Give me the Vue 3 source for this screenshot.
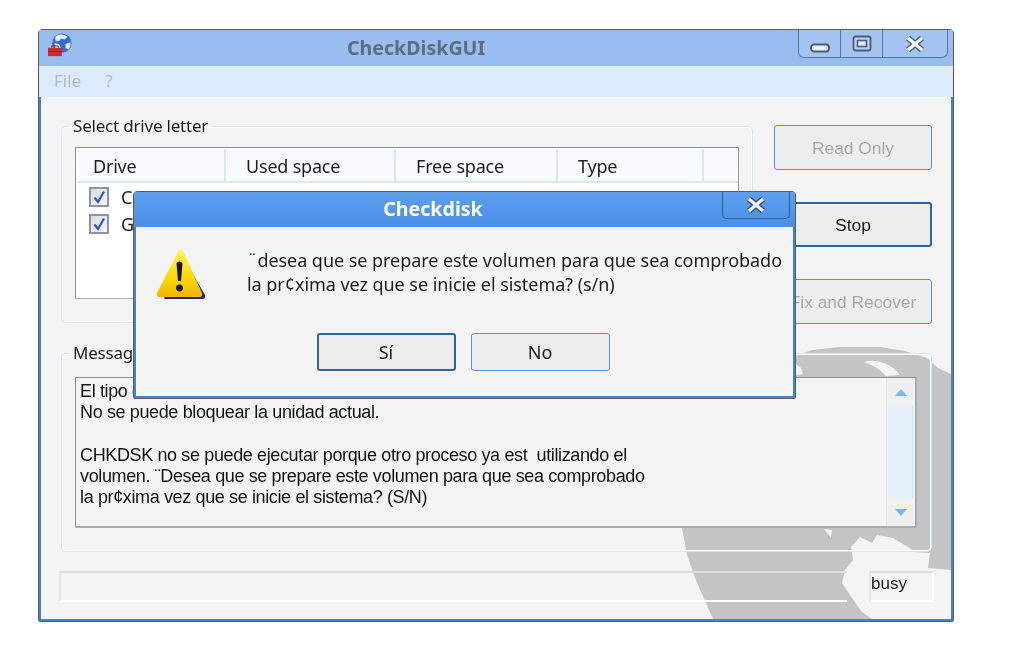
<template>
  <div class="screen">
    <div class="window">
      <div class="titlebar">
        <svg class="app-icon" width="26" height="24" viewBox="0 0 28 26">
          <circle cx="16" cy="11" r="10.5" fill="#2f6fd8" />
          <path d="M9 4c3-3 9-3 13 0l-3 3-4-1-2 3-4-1zM20 12l5-2c1 3 0 6-2 8l-3-2zM8 11l5 1 2 4-3 3-3-3z" fill="#e8eef8" />
          <path d="M1 16h15v9H1z" fill="#c9302c" />
          <path d="M5 16v-2h7v2M1 20h15" fill="none" stroke="#8c1f1c" stroke-width="1" />
        </svg>
        <div class="title-text">CheckDiskGUI</div>
        <div class="caption-buttons">
          <div class="caption-btn btn-min">
            <svg width="22" height="10" viewBox="0 0 22 10"><rect x="2" y="1.500" width="18" height="7" rx="3" fill="#eef3fa" stroke="#4c5d73" stroke-width="1.800" /></svg>
          </div>
          <div class="caption-btn btn-max">
            <svg width="22" height="18" viewBox="0 0 22 18"><rect x="2.500" y="1.500" width="17" height="14" rx="2" fill="#b9d2f3" stroke="#4c5d73" stroke-width="1.800" /><rect x="6.500" y="5.500" width="9" height="6" fill="#dce9f9" stroke="#4c5d73" stroke-width="1.600" /></svg>
          </div>
          <div class="caption-btn btn-close">
            <svg width="22" height="16" viewBox="0 0 22 16"><path d="M4 2l14 12M18 2L4 14" stroke="#4c5d73" stroke-width="6" /><path d="M4 2l14 12M18 2L4 14" stroke="#f4f7fb" stroke-width="3.400" /></svg>
          </div>
        </div>
      </div>
      <div class="menubar">
        <span>File</span>
        <span>?</span>
      </div>

      <div class="body">
        <svg class="watermark" width="910" height="522" viewBox="41 97 910 522">
          <path d="M790 358L812 350 840 347 880 347 905 351 927 358 938 368 951 374 951 570 928 568 930 553 915 552 908 547 893 538 877 535 872 543 860 537 851 547 853 560 845 570 842 583 852 598 862 612 872 619 713 619 697 583 687 555 682 528 682 400z" fill="#c4c4c5" />
          <path d="M864 362c12-4 28 2 36 13l-14 1c-6-7-14-11-22-14zM796 364l5 4 2 6-7 1zM824 529l8 1-1 8-3-4z" fill="#f4f4f4" />
        </svg>

        <div class="top-row">
          <fieldset class="group drive-group">
            <legend>Select drive letter</legend>
            <div class="drive-list">
              <div class="list-head">
                <div v-for="col in columns" :key="col.name" class="list-col" :style="{ width: col.width + 'px' }">{{ col.name }}</div>
              </div>
              <div v-for="drive in drives" :key="drive" class="list-row">
                <span class="check">
                  <svg width="14" height="14" viewBox="0 0 14 14"><path d="M2.500 7.500L6 12 12 1.500" fill="none" stroke="#3557c4" stroke-width="2.200" /></svg>
                </span>
                <span>{{ drive }}</span>
              </div>
            </div>
          </fieldset>
          <div class="side-buttons">
            <button class="btn disabled">Read Only</button>
            <button class="btn strong">Stop</button>
            <button class="btn disabled">Fix and Recover</button>
          </div>
        </div>

        <fieldset class="group message-group">
          <legend>Messages</legend>
          <div class="message-box">
            <div class="message-text">
              <div v-for="(line, i) in messageLines" :key="i" class="message-line">{{ line }}</div>
            </div>
            <div class="scrollbar">
              <div class="scroll-btn"><span class="arrow up"></span></div>
              <div class="scroll-track"></div>
              <div class="scroll-btn"><span class="arrow down"></span></div>
            </div>
          </div>
        </fieldset>

        <div class="statusbar">
          <div class="status-cell status-main"></div>
          <div class="status-cell status-busy">busy</div>
        </div>
      </div>

      <div class="dialog">
        <div class="dialog-title">
          <div class="dialog-title-text">Checkdisk</div>
          <div class="dialog-close">
            <svg width="22" height="16" viewBox="0 0 22 16"><path d="M4 2l14 12M18 2L4 14" stroke="#2f4e78" stroke-width="6" /><path d="M4 2l14 12M18 2L4 14" stroke="#eef3fb" stroke-width="3.400" /></svg>
          </div>
        </div>
        <div class="dialog-body">
          <div class="dialog-content">
            <svg class="warn-icon" width="50" height="52" viewBox="0 0 50 52">
              <defs>
                <linearGradient id="warnFill" x1="0" y1="0" x2="0" y2="1">
                  <stop offset="0" stop-color="#fff35a" />
                  <stop offset="0.6" stop-color="#fcd800" />
                  <stop offset="1" stop-color="#f2b400" />
                </linearGradient>
              </defs>
              <path d="M25 5L49 46q1 4-3 4H8z" fill="#23237f" />
              <path d="M23 1q2-1 4 1L46 44q1 4-3 4H4q-4 0-3-4z" fill="url(#warnFill)" />
              <path d="M20.500 14q3-3 6 0l-1.500 18h-3z" fill="#15152a" />
              <circle cx="23.500" cy="39" r="3.400" fill="#15152a" />
            </svg>
            <div class="dialog-text">
              <div>¨desea que se prepare este volumen para que sea comprobado</div>
              <div>la pr¢xima vez que se inicie el sistema? (s/n)</div>
            </div>
          </div>
          <div class="dialog-buttons">
            <button class="btn dialog-btn strong">Sí</button>
            <button class="btn dialog-btn">No</button>
          </div>
        </div>
      </div>
    </div>
  </div>
</template>

<script setup>
const columns = [
  { name: 'Drive', width: 149 },
  { name: 'Used space', width: 170 },
  { name: 'Free space', width: 162 },
  { name: 'Type', width: 146 }
]

const drives = ['C:\\', 'G:\\']

const messageLines = [
  'El tipo de sistema de archivos es NTFS.',
  'No se puede bloquear la unidad actual.',
  ' ',
  'CHKDSK no se puede ejecutar porque otro proceso ya est  utilizando el',
  'volumen. ¨Desea que se prepare este volumen para que sea comprobado',
  'la pr¢xima vez que se inicie el sistema? (S/N)'
]
</script>

<style>
html,
body {
  background: #fff;
}
</style>

<style scoped>
.screen {
  width: 1020px;
  height: 663px;
  padding: 29px 0 0 38px;
  box-sizing: border-box;
  overflow: hidden;
  filter: blur(0.6px);
  font-family: "Noto Sans", "Open Sans", sans-serif;
  color: #1c1c1c;
}

.window {
  position: relative;
  width: 916px;
  height: 593px;
  box-sizing: border-box;
  border: 1px solid #5c5c5c;
  border-radius: 4px 4px 2px 2px;
  display: flex;
  flex-direction: column;
  background: #98bdee;
}

.titlebar {
  height: 36px;
  flex-shrink: 0;
  display: flex;
  background: #98bdee;
}

.app-icon {
  position: absolute;
  left: 8px;
  top: 3px;
}

.title-text {
  flex: 1;
  padding-right: 5px;
  text-align: center;
  line-height: 35px;
  font-size: 19.6px;
  font-weight: 700;
  color: #5d6d7f;
}

.caption-buttons {
  display: flex;
  height: 28px;
  width: 150px;
  margin-right: 5px;
  box-sizing: border-box;
  border: 1px solid #56779f;
  border-top: none;
  border-radius: 0 0 6px 6px;
}

.caption-btn {
  display: flex;
  align-items: center;
  justify-content: center;
  border-left: 1px solid #56779f;
  background: #a3c4f0;
}

.btn-min {
  width: 41px;
  border-left: none;
  border-radius: 0 0 0 6px;
}

.btn-min svg {
  margin-top: 8px;
}

.btn-max {
  width: 41px;
}

.btn-close {
  flex: 1;
  border-radius: 0 0 6px 0;
}

.menubar {
  height: 31px;
  flex-shrink: 0;
  display: flex;
  gap: 24px;
  padding-left: 15px;
  line-height: 29px;
  font-size: 17px;
  color: #b4bac2;
  background: #dbeafc;
}

.body {
  position: relative;
  isolation: isolate;
  flex: 1;
  min-height: 0;
  box-sizing: border-box;
  border: 2px solid #3f86da;
  border-top: none;
  padding: 19px 0 0 20px;
  background: #f4f4f4;
}

.watermark {
  position: absolute;
  left: 0;
  top: 0;
  z-index: -1;
}

.top-row {
  display: flex;
  gap: 21px;
}

.group {
  margin: 0;
  min-width: 0;
  box-sizing: border-box;
  border: 1px solid #d9e5f2;
  border-radius: 5px;
  box-shadow: inset 0 0 0 1px #fff;
  padding: 0;
}

.group legend {
  margin-left: -6px;
  padding: 0 4px;
  height: 20px;
  line-height: 20px;
  font-size: 17px;
  letter-spacing: -0.2px;
}

.drive-group {
  width: 692px;
  height: 207px;
  padding: 11px 0 0 13px;
}

.drive-list {
  width: 664px;
  height: 152px;
  box-sizing: border-box;
  border: 1px solid #8f8f8f;
  border-right-color: #9a9a9a;
  border-bottom-color: #b0b0b0;
  background: #fff;
  font-size: 18px;
  letter-spacing: -0.2px;
}

.list-head {
  display: flex;
  height: 34px;
  margin: 1px 0 0 1px;
  box-sizing: border-box;
  border-bottom: 2px solid #dce7f4;
  background: linear-gradient(#f6f9fd, #fbfcfe);
}

.list-col {
  box-sizing: border-box;
  flex-shrink: 0;
  padding-left: 16px;
  line-height: 35px;
  border-right: 2px solid #dce7f4;
}

.list-col + .list-col {
  padding-left: 20px;
}

.list-row {
  display: flex;
  align-items: center;
  gap: 12px;
  height: 27px;
  padding-left: 13px;
}

.check {
  width: 20px;
  height: 20px;
  box-sizing: border-box;
  display: flex;
  align-items: center;
  justify-content: center;
  border: 2px solid #8d95a0;
  background: linear-gradient(135deg, #d9dde6, #f5f6f9);
}

.side-buttons {
  display: flex;
  flex-direction: column;
  gap: 32px;
  width: 158px;
  margin-top: 9px;
}

.btn {
  height: 45px;
  box-sizing: border-box;
  border: 1px solid #5f90ca;
  border-radius: 3px;
  background: #ededed;
  font-family: "Liberation Sans", Arial, sans-serif;
  font-size: 17.4px;
  color: #1c1c1c;
  padding: 2px 0 0;
}

.btn.disabled {
  color: #a9a9a9;
}

.btn.strong {
  border: 2px solid #2f659f;
}

.message-group {
  width: 871px;
  height: 209px;
  margin-top: 19px;
  padding: 14px 0 0 13px;
}

.message-box {
  display: flex;
  width: 842px;
  height: 151px;
  box-sizing: border-box;
  border: 1px solid #8f8f8f;
  border-right: 2px solid #a9adb2;
  border-bottom: 2px solid #a9adb2;
  background: #f4f4f4;
}

.message-text {
  flex: 1;
  padding: 3px 0 0 4px;
  font-family: "Liberation Sans", Arial, sans-serif;
  font-size: 18px;
  letter-spacing: -0.37px;
  line-height: 21.3px;
  color: #111;
}

.message-line {
  white-space: pre;
}

.scrollbar {
  width: 28px;
  display: flex;
  flex-direction: column;
  border-left: 1px solid #e6e6e6;
  background: #efefef;
}

.scroll-btn {
  height: 28px;
  display: flex;
  align-items: center;
  justify-content: center;
}

.scroll-track {
  flex: 1;
  margin: 0 2px 0 1px;
  background: #e6f0fd;
  border-right: 1px solid #d4e2f4;
}

.arrow {
  width: 0;
  height: 0;
  border-left: 6px solid transparent;
  border-right: 6px solid transparent;
}

.arrow.up {
  border-bottom: 7px solid #7db4f5;
}

.arrow.down {
  border-top: 7px solid #7db4f5;
}

.statusbar {
  display: flex;
  gap: 22px;
  margin: 19px 0 0 -2px;
}

.status-cell {
  height: 31px;
  box-sizing: border-box;
  border: 2px solid #fff;
  border-top-color: #dedede;
  border-left-color: #e4e4e4;
}

.status-main {
  width: 788px;
  border-right: none;
}

.status-busy {
  width: 65px;
  line-height: 21px;
  font-family: "Liberation Sans", Arial, sans-serif;
  font-size: 17px;
}

.dialog {
  position: absolute;
  left: 94px;
  top: 161px;
  width: 663px;
  height: 208px;
  box-sizing: border-box;
  border: 1px solid #5c5c5c;
  border-radius: 4px 4px 2px 2px;
  display: flex;
  flex-direction: column;
}

.dialog-title {
  height: 35px;
  flex-shrink: 0;
  display: flex;
  background: linear-gradient(#5e9eec, #4a8fe6);
}

.dialog-title-text {
  flex: 1;
  padding-left: 10px;
  text-align: center;
  line-height: 33px;
  font-size: 19.6px;
  font-weight: 700;
  color: #fff;
}

.dialog-close {
  width: 68px;
  height: 27px;
  margin-right: 5px;
  box-sizing: border-box;
  display: flex;
  align-items: center;
  justify-content: center;
  border: 1px solid #2b5c9c;
  border-top: none;
  border-radius: 0 0 5px 5px;
}

.dialog-body {
  flex: 1;
  display: flex;
  flex-direction: column;
  box-sizing: border-box;
  border: 2px solid #3f86da;
  border-top: none;
  background: #f4f4f4;
}

.dialog-content {
  display: flex;
  gap: 41px;
  padding: 22px 0 0 20px;
  height: 106px;
  box-sizing: border-box;
}

.warn-icon {
  flex-shrink: 0;
}

.dialog-text {
  margin-top: -1px;
  font-size: 18px;
  line-height: 24px;
  letter-spacing: -0.05px;
  white-space: nowrap;
}

.dialog-buttons {
  display: flex;
  justify-content: center;
  gap: 15px;
  padding-right: 3px;
}

.dialog-btn {
  width: 139px;
  height: 38px;
  padding: 0;
  font-family: "Noto Sans", sans-serif;
  font-size: 18px;
}
</style>
